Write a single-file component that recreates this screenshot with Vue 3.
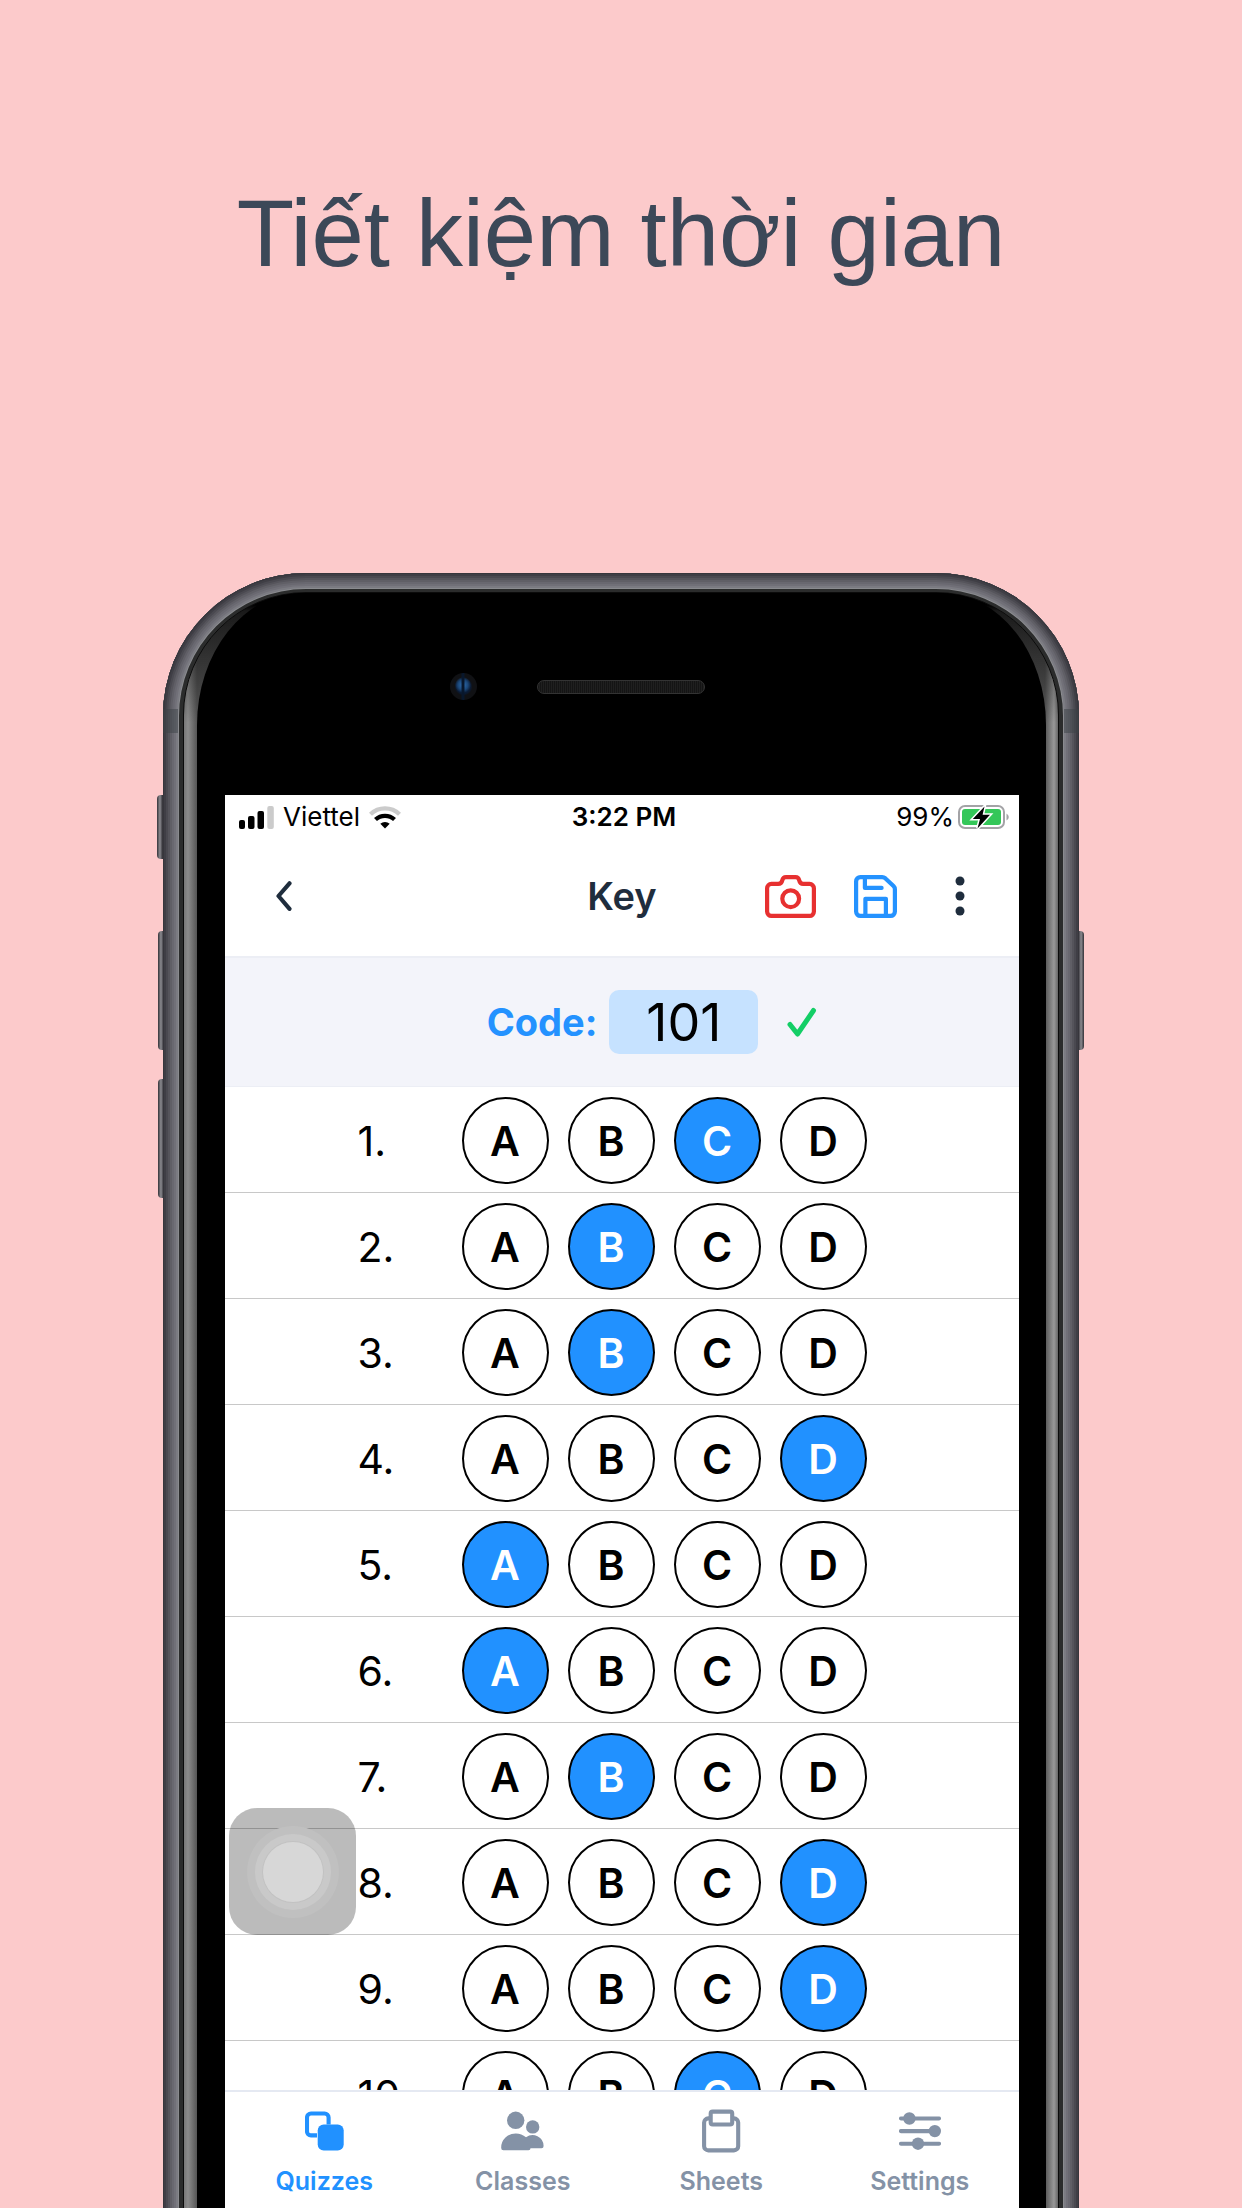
<script setup>
import { ref } from 'vue'

const options = ['A', 'B', 'C', 'D']
const code = ref('101')
const answers = ref(['C', 'B', 'B', 'D', 'A', 'A', 'B', 'D', 'D', 'C'])
</script>

<template>
  <main class="page">
    <h1 class="headline">Tiết kiệm thời gian</h1>

    <div class="phone">
      <span class="side-key mute"></span>
      <span class="side-key volume-up"></span>
      <span class="side-key volume-down"></span>
      <span class="side-key power"></span>
      <div class="shell"></div>
      <div class="antenna"></div>
      <div class="glass"></div>
      <div class="face"></div>
      <span class="lens"></span>
      <span class="speaker"></span>

      <div class="screen">
        <div class="status">
          <div class="carrier">
            <svg width="35" height="23" viewBox="0 0 35 23" aria-hidden="true">
              <rect x="0" y="14" width="6" height="9" rx="2" />
              <rect x="9" y="10" width="6.500" height="13" rx="2" />
              <rect x="18.500" y="5" width="6.500" height="18" rx="2" />
              <rect x="28.300" y="0" width="6.500" height="23" rx="2" fill="#cbcbcb" />
            </svg>
            <span>Viettel</span>
            <svg width="32" height="24" viewBox="0 0 32 24" aria-hidden="true">
              <path d="M1.500 9.200A21 21 0 0 1 30.500 9.200" fill="none" stroke="#cbcbcb" stroke-width="4.300" />
              <path d="M6.500 14.500A14 14 0 0 1 25.500 14.500" fill="none" stroke="#000" stroke-width="4.300" />
              <path d="M16 23.500L11.300 18.800A7 7 0 0 1 20.700 18.800Z" />
            </svg>
          </div>
          <span class="time">3:22 PM</span>
          <div class="power-level">
            <span>99%</span>
            <svg width="51" height="26" viewBox="0 0 51 26" aria-hidden="true">
              <rect x="1" y="2" width="45" height="22" rx="6" fill="none" stroke="#a3a3a6" stroke-width="2" />
              <rect x="4" y="5" width="39" height="16" rx="3" fill="#34c759" />
              <path d="M48.500 9.500Q50.800 11 50.800 13T48.500 16.500Z" fill="#a3a3a6" />
              <path d="M26.500 2.500L14.800 15H22L19.500 24.500L32 10.800H24.600Z" stroke="#fff" stroke-width="3" paint-order="stroke" />
            </svg>
          </div>
        </div>

        <header class="header">
          <div class="group">
            <button class="icon-button" type="button" aria-label="Back">
              <svg width="16" height="30" viewBox="0 0 16 30" fill="none" stroke="#1f2d3d" stroke-width="4.200" stroke-linecap="round" stroke-linejoin="round">
                <path d="M13.500 2.300L2.500 15L13.500 27.800" />
              </svg>
            </button>
          </div>
          <h2 class="title">Key</h2>
          <div class="group end">
            <button class="icon-button" type="button" aria-label="Scan with camera">
              <svg width="51" height="43" viewBox="0 0 51 43" fill="none" stroke="#e73030" stroke-width="4.200" stroke-linejoin="round">
                <path d="M6.400 8.900H13.200Q16.500 8.900 17.300 5.200Q18 2.100 21 2.100H30.500Q33.500 2.100 34.200 5.200Q35 8.900 38.200 8.900H44.600A4.300 4.300 0 0 1 48.900 13.200V36.600A4.300 4.300 0 0 1 44.600 40.900H6.400A4.300 4.300 0 0 1 2.100 36.600V13.200A4.300 4.300 0 0 1 6.400 8.900Z" />
                <circle cx="25.700" cy="23.700" r="8.400" />
              </svg>
            </button>
            <button class="icon-button" type="button" aria-label="Save">
              <svg width="43" height="43" viewBox="0 0 43 43" fill="none" stroke="#2492ff" stroke-width="4.200" stroke-linejoin="round">
                <path d="M6.400 2.100H28.200Q29.900 2.100 31.200 3.200L39.500 11Q40.900 12.400 40.900 14.200V36.600A4.300 4.300 0 0 1 36.600 40.900H6.400A4.300 4.300 0 0 1 2.100 36.600V6.400A4.300 4.300 0 0 1 6.400 2.100Z" />
                <path d="M10.900 2.100V12.900H27.600" stroke-linecap="round" />
                <path d="M11.400 40.900V23.800H31.900V40.900" />
              </svg>
            </button>
            <button class="icon-button" type="button" aria-label="More">
              <svg width="10" height="40" viewBox="0 0 10 40" fill="#1f2d3d">
                <circle cx="5" cy="5" r="4.500" />
                <circle cx="5" cy="20" r="4.500" />
                <circle cx="5" cy="35" r="4.500" />
              </svg>
            </button>
          </div>
        </header>

        <div class="code-bar">
          <label class="code-label" for="code">Code:</label>
          <input id="code" v-model="code" class="code-input" type="text" />
          <svg width="30" height="31" viewBox="0 0 30 31" fill="none" stroke="#13ce66" stroke-width="5" stroke-linecap="round" stroke-linejoin="round" aria-hidden="true">
            <path d="M3 17.500L10.500 27L26.500 3.500" />
          </svg>
        </div>

        <div class="list">
          <div v-for="(answer, index) in answers" :key="index" class="row" role="radiogroup" :aria-label="`Question ${index + 1}`">
            <span class="number">{{ index + 1 }}.</span>
            <label v-for="option in options" :key="option" class="bubble">
              <input v-model="answers[index]" type="radio" :name="`question-${index}`" :value="option" />
              <span>{{ option }}</span>
            </label>
          </div>
        </div>

        <nav class="tabs">
          <a class="tab active" href="#quizzes">
            <svg width="39" height="44" viewBox="0 -2.500 39 44">
              <path d="M12 23.900H6A4 4 0 0 1 2 19.900V6A4 4 0 0 1 6 2H19.600A4 4 0 0 1 23.600 6V13" fill="none" stroke="currentColor" stroke-width="4.100" />
              <rect x="12.700" y="12.900" width="26" height="26" rx="6" fill="currentColor" />
            </svg>
            Quizzes
          </a>
          <a class="tab" href="#classes">
            <svg width="43" height="44" viewBox="0 -2.500 43 44" fill="currentColor">
              <circle cx="14.700" cy="8.800" r="8.700" />
              <circle cx="31.700" cy="15.400" r="6.700" />
              <path d="M0.200 36V36.500Q0.200 38.700 2.400 38.700H27.500Q29.500 38.700 29.500 36.700H40.500Q42.600 36.700 42.600 34.500A11 11 0 0 0 25 25.800A15.500 15.500 0 0 0 14.700 22A14.500 14 0 0 0 0.200 36Z" />
            </svg>
            Classes
          </a>
          <a class="tab" href="#sheets">
            <svg width="39" height="44" viewBox="0 -0.500 39 44" fill="none" stroke="currentColor" stroke-width="4.100" stroke-linejoin="round">
              <path d="M8 8.900H6.300A4.200 4.200 0 0 0 2.100 13.100V36.700A4.200 4.200 0 0 0 6.300 40.900H32A4.200 4.200 0 0 0 36.200 36.700V13.100A4.200 4.200 0 0 0 32 8.900H30.500" />
              <rect x="8.700" y="2.100" width="21.500" height="12.900" rx="2" />
            </svg>
            Sheets
          </a>
          <a class="tab" href="#settings">
            <svg width="42" height="44" viewBox="0 -2.500 42 44" fill="currentColor">
              <path d="M2 7H40M2 19.600H36M2 32.200H40" stroke="currentColor" stroke-width="4.100" stroke-linecap="round" />
              <circle cx="10.400" cy="7" r="6.200" />
              <circle cx="35.800" cy="19.600" r="6.200" />
              <circle cx="19" cy="32.200" r="6.200" />
            </svg>
            Settings
          </a>
        </nav>

        <div class="assistive"><span></span></div>
      </div>
    </div>
  </main>
</template>

<style>
body {
  margin: 0;
}
</style>

<style scoped>
.page {
  box-sizing: border-box;
  display: flex;
  flex-direction: column;
  height: 100vh;
  overflow: hidden;
  background: #fccacb;
  font-family: Inter, "Liberation Sans", sans-serif;
}

.headline {
  margin: 0;
  padding: 180px 0 285px;
  color: #3c4858;
  font-family: "Liberation Sans", sans-serif;
  font-size: 94px;
  font-weight: 400;
  line-height: 108px;
  text-align: center;
}

.phone {
  position: relative;
  box-sizing: border-box;
  display: flex;
  flex: 1 1 0;
  width: 100%;
  max-width: 916px;
  min-height: 0;
  margin: 0 auto;
  padding: 222px 60px 0 62px;
}

.shell,
.glass,
.face {
  position: absolute;
}

.shell {
  inset: 0 0 -200px;
  border-radius: 143px;
  background: #2b2c2c;
  box-shadow:
    inset 0 0 0 1px #37363c,
    inset 0 0 0 3px #3f3e45,
    inset 0 0 0 5px #4a4950,
    inset 0 0 0 7px #55545b,
    inset 0 0 0 9px #605f66,
    inset 0 0 0 11px #696870,
    inset 0 0 0 13px #717078,
    inset 0 0 0 15px #7b7b82,
    inset 0 0 0 16px #8a8b8f;
}

.antenna {
  position: absolute;
  top: 136px;
  right: 0;
  left: 0;
  height: 24px;
  border: solid rgba(60, 65, 70, 0.5);
  border-width: 0 15px;
}

.glass {
  inset: 19px 20px -200px;
  border: 1px solid #0b0b0b;
  border-radius: 123px;
  background:
    linear-gradient(180deg, #000 12px, rgba(0, 0, 0, 0.7) 18px, transparent 130px),
    linear-gradient(90deg, #777 0, #8c8c8c 4px, #555 13px, #666 50%, #555 calc(100% - 13px), #999 calc(100% - 4px), #666 100%);
}

.face {
  inset: 20px 33px -200px 34px;
  border-radius: 105px / 132px;
  background: #000;
}

.side-key {
  position: absolute;
  left: -5px;
  width: 10px;
  height: 119px;
  border-radius: 4px;
  background: linear-gradient(90deg, #333238, #8e8e93 3px, #66656b 4px, #2b2a2f 6px);
}

.mute {
  top: 222px;
  left: -6px;
  height: 64px;
}

.volume-up {
  top: 358px;
}

.volume-down {
  top: 506px;
}

.power {
  top: 358px;
  right: -5px;
  left: auto;
  background: linear-gradient(270deg, #333238, #8e8e93 3px, #66656b 4px, #2b2a2f 6px);
}

.lens {
  position: absolute;
  top: 100px;
  left: 287px;
  width: 27px;
  height: 27px;
  border-radius: 50%;
  background:
    linear-gradient(90deg, transparent 11px, #08172c 12px, #08172c 14px, transparent 15px),
    radial-gradient(circle at 13px 12px, #2f70b4 0, #1b4677 5px, transparent 8px),
    radial-gradient(circle, #0a1a33 7px, #101114 9px);
}

.speaker {
  position: absolute;
  top: 107px;
  left: 50%;
  box-sizing: border-box;
  width: 168px;
  height: 14px;
  margin-left: -84px;
  border: 1px solid #333;
  border-radius: 7px;
  background: repeating-linear-gradient(90deg, #141414 0, #141414 1px, #1f1f1f 1px, #1f1f1f 2px);
}

.screen {
  position: relative;
  display: flex;
  flex: 1;
  flex-direction: column;
  min-width: 0;
  background: #fff;
}

.status {
  display: grid;
  grid-template-columns: 1fr auto 1fr;
  align-items: center;
  height: 44px;
  padding: 0 10px 0 14px;
  font-size: 26px;
  line-height: 32px;
}

.carrier,
.power-level {
  display: flex;
  align-items: center;
  gap: 9px;
}

.power-level {
  justify-content: flex-end;
  gap: 4px;
}

.time {
  font-weight: 600;
}

.header {
  display: grid;
  grid-template-columns: 1fr auto 1fr;
  align-items: center;
  height: 114px;
  padding: 0 29px 3px;
  border-bottom: 2px solid #eceef5;
}

.header,
.code-bar,
.tabs {
  flex-shrink: 0;
}

.group {
  display: flex;
  gap: 25px;
}

.end {
  justify-content: flex-end;
}

.icon-button {
  display: flex;
  align-items: center;
  justify-content: center;
  width: 60px;
  height: 60px;
  padding: 0;
  border: 0;
  background: none;
}

.title {
  margin: 0;
  color: #1f2d3d;
  font-size: 38px;
  font-weight: 600;
  line-height: 48px;
}

.code-bar {
  display: flex;
  align-items: center;
  justify-content: center;
  height: 128px;
  padding-left: 60px;
  border-bottom: 1px solid #eceef5;
  background: #f3f4fa;
}

.code-label {
  color: #2492ff;
  font-size: 38px;
  font-weight: 700;
}

.code-input {
  box-sizing: border-box;
  width: 149px;
  height: 64px;
  margin: 0 29px 0 12px;
  padding: 0;
  border: 0;
  border-radius: 10px;
  background: #c6e2ff;
  color: #000;
  font-family: inherit;
  font-size: 52px;
  text-align: center;
}

.list {
  flex: 1 1 0;
  min-height: 0;
  overflow: hidden;
}

.row {
  box-sizing: border-box;
  display: flex;
  align-items: center;
  justify-content: center;
  gap: 19px;
  height: 106px;
  padding: 2px 20px 0 0;
  border-bottom: 1px solid #c8c8c8;
  font-size: 41px;
}

.number {
  width: 85px;
}

.bubble {
  position: relative;
  display: flex;
  align-items: center;
  justify-content: center;
  width: 87px;
  height: 87px;
  font-weight: 600;
}

.bubble input {
  position: absolute;
  inset: 0;
  box-sizing: border-box;
  width: 100%;
  height: 100%;
  margin: 0;
  border: 2px solid #000;
  border-radius: 50%;
  appearance: none;
}

.bubble input:checked {
  background: #2191ff;
}

.bubble span {
  position: relative;
}

.bubble input:checked + span {
  color: #fff;
}

.tabs {
  display: grid;
  grid-template-columns: repeat(4, 1fr);
  height: 116px;
  border-top: 2px solid #e5e9f2;
}

.tab {
  display: flex;
  flex-direction: column;
  align-items: center;
  gap: 12px;
  padding-top: 17px;
  color: #8492a6;
  font-size: 25px;
  font-weight: 600;
  line-height: 32px;
  text-decoration: none;
}

.active {
  color: #2191ff;
}

.assistive {
  position: absolute;
  bottom: 273px;
  left: 4px;
  display: flex;
  align-items: center;
  justify-content: center;
  width: 127px;
  height: 127px;
  border-radius: 28px;
  background: rgba(0, 0, 0, 0.265);
}

.assistive span {
  width: 60px;
  height: 60px;
  border-radius: 50%;
  background: #d7d7d7;
  box-shadow: 0 0 0 1px #c2c2c2, 0 0 0 8px #c9c9c9, 0 0 0 16px #c0c0c0;
}
</style>
